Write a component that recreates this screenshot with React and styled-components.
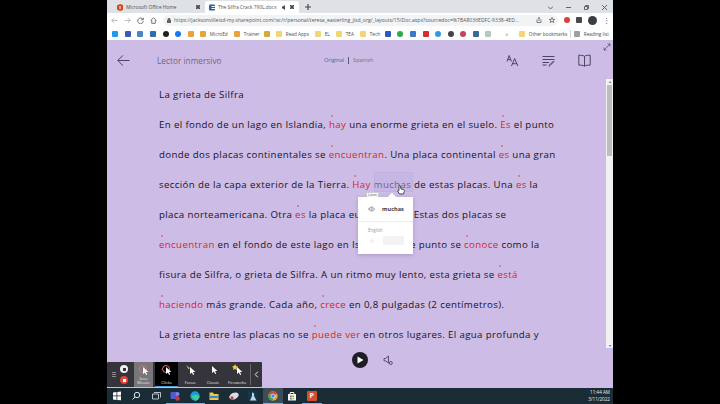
import React from "react";
import styled, { createGlobalStyle } from "styled-components";

const GlobalStyle = createGlobalStyle`
	html, body {
		margin: 0;
		padding: 0;
		background: #000;
		width: 720px;
		height: 404px;
		overflow: hidden;
	}
	* {
		box-sizing: border-box;
	}
`;

const Stage = styled.div`
	width: 720px;
	height: 404px;
	background: #000;
	padding: 0 107px;
	font-family: "Open Sans", "Liberation Sans", sans-serif;
`;

const Screen = styled.div`
	position: relative;
	width: 506px;
	height: 404px;
	display: flex;
	flex-direction: column;
	overflow: hidden;
`;

const TabBar = styled.div`
	height: 13px;
	background: #dee1e6;
	display: flex;
	align-items: flex-end;
	padding-left: 6px;
	flex-shrink: 0;
`;

const Tab = styled.div`
	width: ${(p) => (p.$active ? "94px" : "92px")};
	height: 12px;
	background: ${(p) => (p.$active ? "#fff" : "transparent")};
	border-radius: 3px 3px 0 0;
	display: flex;
	align-items: center;
	gap: 3px;
	padding: 0 4px;
	font-size: 4.8px;
	color: #4c4f54;
	white-space: nowrap;
`;

const TabIcon = styled.svg`
	width: 6px;
	height: 7px;
	flex-shrink: 0;
`;

const TabTitle = styled.span`
	flex: 1;
	overflow: hidden;
`;

const TabAudio = styled.svg`
	width: 5px;
	height: 5px;
	fill: #45484c;
	flex-shrink: 0;
`;

const TabClose = styled.svg`
	width: 4px;
	height: 4px;
	stroke: #45484c;
	stroke-width: 1.6;
	fill: none;
	flex-shrink: 0;
	margin-right: 1px;
`;

const NewTab = styled.svg`
	margin: 0 0 3px 6px;
	width: 6px;
	height: 6px;
	stroke: #45484c;
	stroke-width: 1.2;
	fill: none;
`;

const WindowControls = styled.div`
	margin-left: auto;
	display: flex;
	align-items: center;
	height: 12px;
	gap: 13px;
	padding-right: 6px;
`;

const WindowIcon = styled.svg`
	width: 5px;
	height: 5px;
	stroke: #55585c;
	stroke-width: 0.9;
	fill: none;
`;

const Toolbar = styled.div`
	height: 14px;
	background: #fff;
	display: flex;
	align-items: center;
	padding: 0 6px 0 4px;
	gap: 6px;
	flex-shrink: 0;
`;

const NavIcon = styled.svg`
	width: 7px;
	height: 7px;
	flex-shrink: 0;
	stroke: ${(p) => p.$color || "#5f6368"};
	stroke-width: 1.3;
	fill: none;
`;

const Omnibox = styled.div`
	flex: 1;
	height: 11px;
	border-radius: 6px;
	background: #f1f3f4;
	display: flex;
	align-items: center;
	padding: 0 3px 0 4px;
	gap: 3px;
	font-size: 5.1px;
	color: #55585d;
	white-space: nowrap;
	overflow: hidden;
	min-width: 0;
`;

const LockIcon = styled.svg`
	width: 4px;
	height: 5px;
	fill: #5f6368;
	flex-shrink: 0;
`;

const Url = styled.span`
	flex: 1;
	min-width: 0;
`;

const OmniIcon = styled.svg`
	width: 6px;
	height: 6px;
	margin-left: 4px;
	stroke: #5f6368;
	stroke-width: 0.8;
	fill: none;
	flex-shrink: 0;
`;

const Extension = styled.span`
	width: ${(p) => p.$size}px;
	height: ${(p) => p.$size}px;
	border-radius: ${(p) => (p.$square ? "1px" : "50%")};
	background: ${(p) => p.$color};
	flex-shrink: 0;
`;

const MenuDots = styled.span`
	width: 4px;
	font-size: 7px;
	line-height: 7px;
	text-align: center;
	color: #55585c;
	flex-shrink: 0;
`;

const Bookmarks = styled.div`
	height: 13px;
	background: #fff;
	display: flex;
	align-items: center;
	padding-left: 2px;
	flex-shrink: 0;
	font-size: 4.7px;
	color: #4a4d52;
	white-space: nowrap;
`;

const FavSlot = styled.span`
	width: 12.6px;
	display: flex;
	justify-content: center;
	flex-shrink: 0;
`;

const Fav = styled.span`
	width: 6px;
	height: 6px;
	border-radius: ${(p) => (p.$round ? "50%" : "1px")};
	background: ${(p) => p.$color};
	flex-shrink: 0;
`;

const Bookmark = styled.span`
	width: ${(p) => p.$width}px;
	display: flex;
	align-items: center;
	gap: 4px;
	flex-shrink: 0;
`;

const Overflow = styled.span`
	width: 24px;
	text-align: center;
	font-size: 5px;
	color: #55585c;
	flex-shrink: 0;
`;

const BookmarkDivider = styled.span`
	width: 1px;
	height: 8px;
	background: #d8d8d8;
	margin: 0 3px;
	flex-shrink: 0;
`;

const Reader = styled.div`
	flex: 1;
	min-height: 0;
	display: flex;
	background: #cdbde6;
`;

const ReaderMain = styled.div`
	flex: 1;
	min-width: 0;
	display: flex;
	flex-direction: column;
`;

const ReaderHeader = styled.div`
	height: 40px;
	display: flex;
	align-items: center;
	padding: 0 15px 0 10px;
	flex-shrink: 0;
`;

const HeaderTitle = styled.div`
	margin-left: 27px;
	width: 167px;
	font-size: 8.3px;
	color: #6d6780;
`;

const LangSwitch = styled.div`
	display: flex;
	align-items: center;
	font-size: 5.5px;
	color: #75708a;
	gap: 4px;
`;

const LangActive = styled.span`
	color: #3f68a8;
`;

const LangDivider = styled.span`
	width: 1px;
	height: 7px;
	background: #5d5870;
`;

const HeaderTools = styled.div`
	margin-left: auto;
	display: flex;
	align-items: center;
	gap: 23px;
`;

const HeaderIcon = styled.svg`
	width: 13px;
	height: 13px;
	stroke: #4a4560;
	stroke-width: 1;
	fill: none;
	flex-shrink: 0;
`;

const Article = styled.div`
	flex: 1;
	min-height: 0;
	padding: 0 0 0 52px;
	overflow: hidden;
`;

const Line = styled.p`
	margin: 0;
	height: 30px;
	line-height: 30px;
	font-size: 9.7px;
	letter-spacing: 0.36px;
	color: #16131f;
	white-space: nowrap;
`;

const Verb = styled.span`
	position: relative;
	color: #d8261c;

	&::before {
		content: "";
		position: absolute;
		left: 2px;
		top: -3px;
		width: 2px;
		height: 2px;
		border-radius: 50%;
		background: #dd6f70;
	}
`;

const ControlBar = styled.div`
	height: 42px;
	display: flex;
	align-items: flex-start;
	padding: 6px 0 0 245px;
	gap: 15px;
	flex-shrink: 0;
`;

const PlayButton = styled.div`
	width: 16px;
	height: 16px;
	border-radius: 50%;
	background: #1f1d26;
	display: flex;
	align-items: center;
	justify-content: center;
`;

const PlayGlyph = styled.svg`
	width: 8px;
	height: 8px;
	fill: #fff;
`;

const VoiceIcon = styled.svg`
	width: 11px;
	height: 11px;
	margin-top: 3px;
	stroke: #4a4560;
	stroke-width: 0.9;
	fill: none;
`;

const Scrollbar = styled.div`
	width: 7px;
	background: #f1f1f1;
	display: flex;
	flex-direction: column;
	justify-content: space-between;
	align-items: center;
	margin: 39px 0 40px;
	font-size: 4px;
	line-height: 5px;
	color: #606060;
`;

const ScrollThumb = styled.div`
	width: 5px;
	height: 71px;
	background: #bdbdbd;
	margin-top: 1px;
	margin-bottom: auto;
`;

const ExpandIcon = styled.svg`
	position: absolute;
	right: 2px;
	top: 43px;
	width: 8px;
	height: 8px;
	stroke: #4a4560;
	stroke-width: 0.7;
	fill: none;
`;

const Taskbar = styled.div`
	height: 16px;
	background: #1a2c36;
	display: flex;
	align-items: center;
	padding-right: 3px;
	flex-shrink: 0;
`;

const TaskSlot = styled.div`
	width: 19.5px;
	height: 16px;
	display: flex;
	align-items: center;
	justify-content: center;
	background: ${(p) => (p.$active ? "#3d4c56" : "transparent")};
	box-shadow: ${(p) => (p.$open ? "inset 0 -1px 0 #6fb3e8" : "none")};
`;

const TaskGlyph = styled.svg`
	width: 10px;
	height: 10px;
`;

const PptLetter = styled.span`
	width: 10px;
	height: 10px;
	border-radius: 1px;
	background: #d2502c;
	color: #fff;
	font-size: 7px;
	font-weight: 700;
	line-height: 10px;
	text-align: center;
`;

const Clock = styled.div`
	margin-left: auto;
	color: #e8ecef;
	font-size: 4.6px;
	line-height: 7px;
	text-align: right;
`;

const RecorderBar = styled.div`
	position: absolute;
	left: 0;
	top: 362px;
	width: 155px;
	height: 25px;
	background: #35343a;
	border-radius: 1px;
	display: flex;
	align-items: stretch;
	color: #e4e4e4;
`;

const Grip = styled.div`
	width: 11px;
	padding-left: 5px;
	display: flex;
	flex-direction: column;
	justify-content: center;
	gap: 1px;
`;

const GripBar = styled.span`
	width: 4px;
	height: 1px;
	background: #8d8d90;
`;

const RecButtons = styled.div`
	width: 12px;
	margin-right: 4px;
	display: flex;
	flex-direction: column;
	align-items: center;
	justify-content: center;
	gap: 3px;
`;

const RecDot = styled.span`
	width: 8px;
	height: 8px;
	border-radius: 50%;
	background: ${(p) => p.$color};
	display: flex;
	align-items: center;
	justify-content: center;

	&::after {
		content: "";
		width: 3px;
		height: 3px;
		background: ${(p) => p.$inner};
	}
`;

const RecTool = styled.div`
	width: ${(p) => p.$width}px;
	margin-right: ${(p) => p.$gap || 0}px;
	background: ${(p) => (p.$selected ? "#77767a" : p.$black ? "#000" : "transparent")};
	box-shadow: ${(p) => (p.$black ? "inset 0 -1px 0 #4f9fd8" : "none")};
	display: flex;
	flex-direction: column;
	align-items: center;
	justify-content: flex-end;
	padding-bottom: 2px;
	gap: 1px;
	font-size: 4px;
	line-height: 4.2px;
	text-align: center;
	white-space: pre-line;
`;

const ToolIcon = styled.svg`
	width: 11px;
	height: 11px;
	margin-bottom: auto;
	margin-top: 2px;
	flex-shrink: 0;
`;

const Collapse = styled.div`
	margin-left: auto;
	width: 12px;
	margin-top: 2px;
	margin-bottom: 2px;
	border-left: 1px solid #66656b;
	display: flex;
	align-items: center;
	justify-content: center;
`;

const HoverBox = styled.div`
	position: absolute;
	left: 267px;
	top: 172px;
	width: 39px;
	height: 20px;
	background: rgba(190, 176, 226, 0.5);
	box-shadow: inset 0 0 0 0.5px #bcaedb;
`;

const Cursor = styled.svg`
	position: absolute;
	left: 289px;
	top: 184px;
	width: 10px;
	height: 11px;
	fill: #fff;
	stroke: #3a3a3a;
	stroke-width: 0.9;
`;

const Popup = styled.div`
	position: absolute;
	left: 251px;
	top: 197px;
	width: 55px;
	height: 57px;
	background: #fff;
	box-shadow: 0 1px 4px rgba(60, 40, 90, 0.25);
	display: flex;
	flex-direction: column;

	&::before {
		content: "";
		position: absolute;
		left: 31px;
		top: -3px;
		width: 6px;
		height: 6px;
		background: #fff;
		transform: rotate(45deg);
	}
`;

const PopupWord = styled.div`
	height: 25px;
	display: flex;
	align-items: center;
	gap: 6px;
	padding-left: 10px;
	font-size: 5.6px;
	font-weight: 700;
	color: #3c3a44;
	border-bottom: 1px solid #f0f0f0;
`;

const SpeakerIcon = styled.svg`
	width: 8px;
	height: 8px;
	stroke: #777;
	stroke-width: 0.8;
	fill: none;
`;

const PopupLabel = styled.div`
	margin: 5px 0 0 10px;
	font-size: 4.5px;
	color: #999;
`;

const PopupRow = styled.div`
	margin: 3px 0 0 12px;
	display: flex;
	align-items: center;
	gap: 9px;
`;

const PopupDot = styled.span`
	width: 4px;
	height: 4px;
	background: #f1f1f1;
	border-radius: 50%;
`;

const PopupBlank = styled.span`
	width: 21px;
	height: 9px;
	background: #f3f3f3;
`;

const Tooltip = styled.div`
	position: absolute;
	left: 259px;
	top: 192px;
	width: 13px;
	height: 6px;
	background: #fff;
	border: 0.5px solid #ccc;
	font-size: 3.2px;
	line-height: 5px;
	text-align: center;
	color: #555;
`;

const lines = [
	["La grieta de Silfra"],
	["En el fondo de un lago en Islandia, ", { v: "hay" }, " una enorme grieta en el suelo. ", { v: "Es" }, " el punto"],
	["donde dos placas continentales se ", { v: "encuentran" }, ". Una placa continental ", { v: "es" }, " una gran"],
	["sección de la capa exterior de la Tierra. ", { v: "Hay" }, " muchas de estas placas. Una ", { v: "es" }, " la"],
	["placa norteamericana. Otra ", { v: "es" }, " la placa euroasiática. Estas dos placas se"],
	[{ v: "encuentran" }, " en el fondo de este lago en Islandia. Este punto se ", { v: "conoce" }, " como la"],
	["fisura de Silfra, o grieta de Silfra. A un ritmo muy lento, esta grieta se ", { v: "está" }],
	[{ v: "haciendo" }, " más grande. Cada año, ", { v: "crece" }, " en 0,8 pulgadas (2 centímetros)."],
	["La grieta entre las placas no se ", { v: "puede ver" }, " en otros lugares. El agua profunda y"],
];

const favs = ["#1d9bf0", "#3b5bb5", "#4a86c5", "#2a6db5", "#222", "#1877f2", "#e8a33d", "#e8a33d"];
const tail = ["#2a5bc4", "#2da84a", "#3a78c8", "#d62b2b", "#2f9be0", "#444", "#c0455a", "#3a6a9a", "#b9c9b9"];
const folder = "#f2d575";

const ArrowCursor = ({ x = 3, y = 2 }) => (
	<path transform={`translate(${x} ${y})`} d="M0 0v7l1.800-1.600L3.200 8l1-.6L3 5h2.400z" fill="#fff" />
);

const App = () => {
	return (
		<Stage>
			<GlobalStyle />
			<Screen>
				<TabBar>
					<Tab>
						<TabIcon viewBox="0 0 6 7"><path d="M3 0 6 1v5L3 7 0 5.500v-4z" fill="#d9481c" /><path d="M3 2v3" stroke="#fff" /></TabIcon>
						<TabTitle>Microsoft Office Home</TabTitle>
						<TabClose viewBox="0 0 4 4"><path d="M0 0l4 4M4 0 0 4" /></TabClose>
					</Tab>
					<Tab $active>
						<TabIcon viewBox="0 0 6 7"><rect y="0.500" width="6" height="6" rx="1" fill="#2b5fa8" /><rect x="2.500" y="2" width="3.500" height="1" fill="#fff" /><rect x="2.500" y="4" width="3.500" height="1" fill="#fff" /></TabIcon>
						<TabTitle>The Silfra Crack 790L.docx</TabTitle>
						<TabAudio viewBox="0 0 5 5"><path d="M0 1.500v2h1L3 5V0L1 1.500z" /></TabAudio>
						<TabClose viewBox="0 0 4 4"><path d="M0 0l4 4M4 0 0 4" /></TabClose>
					</Tab>
					<NewTab viewBox="0 0 6 6"><path d="M3 0v6M0 3h6" /></NewTab>
					<WindowControls>
						<WindowIcon viewBox="0 0 5 5"><path d="M0 1.500 2.500 4 5 1.500" /></WindowIcon>
						<WindowIcon viewBox="0 0 5 5"><path d="M0 2.500h5" /></WindowIcon>
						<WindowIcon viewBox="0 0 5 5"><path d="M0.500 1.500h3v3h-3zM1.500 1.500v-1h3v3h-1" /></WindowIcon>
						<WindowIcon viewBox="0 0 5 5"><path d="M0 0l5 5M5 0 0 5" /></WindowIcon>
					</WindowControls>
				</TabBar>
				<Toolbar>
					<NavIcon viewBox="0 0 10 10" $color="#b5b8bc"><path d="M9 5H1M4.500 1.500 1 5l3.500 3.500" /></NavIcon>
					<NavIcon viewBox="0 0 10 10" $color="#b5b8bc"><path d="M1 5h8M5.500 1.500 9 5 5.500 8.500" /></NavIcon>
					<NavIcon viewBox="0 0 10 10"><path d="M8.500 3.500A4 4 0 1 0 9 6M9 1v3H6" /></NavIcon>
					<NavIcon viewBox="0 0 10 10"><path d="M1 5l4-4 4 4M2.500 4.500V9h5V4.500" /></NavIcon>
					<Omnibox>
						<LockIcon viewBox="0 0 4 5"><path d="M0 2h.6V1.300a1.400 1.300 0 0 1 2.800 0V2H4v3H0z" /></LockIcon>
						<Url>https://jacksonvilleisd-my.sharepoint.com/:w:/r/personal/teresa_easterling_jisd_org/_layouts/15/Doc.aspx?sourcedoc=%7BA8036EDFC-9338-4ED...</Url>
						<OmniIcon viewBox="0 0 6 6"><path d="M1 2.500V5.500h4V2.500M3 4V.5M1.800 1.500 3 .5l1.200 1" /></OmniIcon>
						<OmniIcon viewBox="0 0 6 6"><path d="M3 .5 3.700 2.300 5.700 2.400 4.100 3.600 4.700 5.500 3 4.400 1.300 5.500 1.900 3.600.3 2.400 2.300 2.300z" /></OmniIcon>
					</Omnibox>
					<Extension $size={6} $color="#d9403a" />
					<Extension $size={6} $color="#45484c" $square />
					<Extension $size={9} $color="#3a3d42" />
					<MenuDots>⋮</MenuDots>
				</Toolbar>
				<Bookmarks>
					{favs.map((color, i) => (
						<FavSlot key={i}><Fav $color={color} $round={i === 4 || i === 5} /></FavSlot>
					))}
					<Bookmark $width={24}>MicroEd</Bookmark>
					<Bookmark $width={30}><Fav $color="#e8a33d" />Trainer</Bookmark>
					<Bookmark $width={12}><Fav $color="#d8a838" /></Bookmark>
					<Bookmark $width={39}><Fav $color={folder} />Read Apps</Bookmark>
					<Bookmark $width={21}><Fav $color={folder} />EL</Bookmark>
					<Bookmark $width={24}><Fav $color={folder} />TEA</Bookmark>
					<Bookmark $width={21.7}><Fav $color={folder} />Tech</Bookmark>
					{tail.map((color, i) => (
						<FavSlot key={i}><Fav $color={color} $round={i === 1 || (i > 3 && i < 7)} /></FavSlot>
					))}
					<Overflow>»</Overflow>
					<Bookmark $width={48}><Fav $color={folder} />Other bookmarks</Bookmark>
					<BookmarkDivider />
					<Bookmark $width={34}><Fav $color="#9aa0a6" />Reading list</Bookmark>
				</Bookmarks>
				<Reader>
					<ReaderMain>
						<ReaderHeader>
							<HeaderIcon viewBox="0 0 13 13"><path d="M12.500 6.500H.8M6 1.300.8 6.500 6 11.700" /></HeaderIcon>
							<HeaderTitle>Lector inmersivo</HeaderTitle>
							<LangSwitch>
								<LangActive>Original</LangActive>
								<LangDivider />
								<span>Spanish</span>
							</LangSwitch>
							<HeaderTools>
								<HeaderIcon viewBox="0 0 13 13"><path d="M1 7.500 3.200 1.500 5.400 7.500M1.700 5.600h3M5.500 12 8.600 4.500 11.800 12M6.600 9.700h4.200" /></HeaderIcon>
								<HeaderIcon viewBox="0 0 13 13"><path d="M.5 2.500h12M.5 5.500h12M.5 8.500h6.500M.5 11h4M12 7.500 8 11.500l-1 .8.5-1.300 4-4z" /></HeaderIcon>
								<HeaderIcon viewBox="0 0 13 13"><path d="M6.500 2.300C5.300 1.300 2.500 1.200.8 1.200v9.900c1.700 0 4.500.1 5.700 1.100 1.200-1 4-1.100 5.700-1.100V1.200c-1.700 0-4.500.1-5.700 1.100zM6.500 2.300v9.900" /></HeaderIcon>
							</HeaderTools>
						</ReaderHeader>
						<Article>
							{lines.map((parts, i) => (
								<Line key={i}>
									{parts.map((part, j) =>
										typeof part === "string" ? part : <Verb key={j}>{part.v}</Verb>
									)}
								</Line>
							))}
						</Article>
						<ControlBar>
							<PlayButton>
								<PlayGlyph viewBox="0 0 8 8"><path d="M1.500 0.500 7.500 4l-6 3.500z" /></PlayGlyph>
							</PlayButton>
							<VoiceIcon viewBox="0 0 11 11">
								<path d="M1 3.500v2.300h1.500L5.500 8V1L2.500 3.500z" />
								<circle cx="7.800" cy="8" r="1.500" />
							</VoiceIcon>
						</ControlBar>
					</ReaderMain>
					<Scrollbar>
						<span>▴</span>
						<ScrollThumb />
						<span>▾</span>
					</Scrollbar>
				</Reader>
				<Taskbar>
					<TaskSlot>
						<TaskGlyph viewBox="0 0 10 10"><path d="M1 1.500 4.500 1v3.500H1zM5.300 1 9 .5v4H5.300zM1 5.300h3.500V9L1 8.500zM5.300 5.300H9v4L5.300 9z" fill="#fff" /></TaskGlyph>
					</TaskSlot>
					<TaskSlot>
						<TaskGlyph viewBox="0 0 10 10"><circle cx="6" cy="4" r="2.700" fill="none" stroke="#dfe4e8" /><path d="M4 6 1.500 8.500" stroke="#dfe4e8" /></TaskGlyph>
					</TaskSlot>
					<TaskSlot>
						<TaskGlyph viewBox="0 0 10 10"><path d="M1.500 3h6v5h-6zM3 1.500h6.500v5" fill="none" stroke="#dfe4e8" strokeWidth="0.800" /></TaskGlyph>
					</TaskSlot>
					<TaskSlot $open>
						<TaskGlyph viewBox="0 0 10 10"><rect x="0.500" y="1" width="7" height="7" rx="1" fill="#5059c9" /><circle cx="7.500" cy="3" r="2" fill="#7b83eb" /><circle cx="7.500" cy="7.500" r="2.300" fill="#c8383f" /></TaskGlyph>
					</TaskSlot>
					<TaskSlot $open>
						<TaskGlyph viewBox="0 0 10 10"><circle cx="5" cy="5" r="4.700" fill="#1f9ad6" /><path d="M1 6.500C3 3 7 3 9.500 5.500 9 8 7 9.700 5 9.700 4 8 3 6.500 1 6.500z" fill="#3ccf91" /></TaskGlyph>
					</TaskSlot>
					<TaskSlot>
						<TaskGlyph viewBox="0 0 10 10"><path d="M.5 1.500h3.500l1 1.500h4.500v6H.5z" fill="#f2c14e" /><rect x="0.500" y="5" width="9" height="2" fill="#2f8fd0" /></TaskGlyph>
					</TaskSlot>
					<TaskSlot>
						<TaskGlyph viewBox="0 0 10 10"><ellipse cx="5" cy="5" rx="5" ry="3.200" transform="rotate(-25 5 5)" fill="#d7dee4" /><circle cx="3" cy="6.800" r="1.500" fill="#c8383f" /></TaskGlyph>
					</TaskSlot>
					<TaskSlot>
						<TaskGlyph viewBox="0 0 10 10"><rect width="10" height="10" fill="#12364f" /><path d="M4 1.500c2 0 2.500 2 2 3.500L8.500 9.500H2L4 5z" fill="#bcd8e6" /></TaskGlyph>
					</TaskSlot>
					<TaskSlot $active $open>
						<TaskGlyph viewBox="0 0 10 10"><circle cx="5" cy="5" r="4.700" fill="#e0a93a" /><path d="M5 5 .9 2.700A4.700 4.700 0 0 1 9.100 2.700z" fill="#d8453a" /><path d="M5 5 .9 2.700A4.700 4.700 0 0 0 5 9.700z" fill="#3ba35a" /><circle cx="5" cy="5" r="2" fill="#4285f4" stroke="#fff" strokeWidth="0.600" /></TaskGlyph>
					</TaskSlot>
					<TaskSlot>
						<TaskGlyph viewBox="0 0 10 10"><path d="M1 3h8v6.500H1z" fill="#f4f5f6" /><path d="M3.200 3V1.500h3.600V3" fill="none" stroke="#f4f5f6" /><rect x="3" y="4.500" width="1.700" height="1.700" fill="#e0543c" /><rect x="5.300" y="4.500" width="1.700" height="1.700" fill="#6fb23f" /><rect x="3" y="6.800" width="1.700" height="1.700" fill="#2f8fd0" /><rect x="5.300" y="6.800" width="1.700" height="1.700" fill="#e8b93d" /></TaskGlyph>
					</TaskSlot>
					<TaskSlot $open><PptLetter>P</PptLetter></TaskSlot>
					<Clock>
						11:44 AM
						<br />
						3/11/2022
					</Clock>
				</Taskbar>

				<ExpandIcon viewBox="0 0 8 8"><path d="M1 7 7 1M4.500 1H7v2.500M1 4.500V7h2.500" /></ExpandIcon>
				<HoverBox />
				<Cursor viewBox="0 0 10 11"><path d="M3 1.500c.8-.6 1.200 0 1.300.6L5 5l2.500.5c1 .3 1 1 .8 2L7.500 10h-4L1.500 7l1.500-.5z" /></Cursor>
				<Tooltip>Listen</Tooltip>
				<Popup>
					<PopupWord>
						<SpeakerIcon viewBox="0 0 8 8"><path d="M1 3v2h1.500L4 6.500v-5L2.500 3zM5.500 2.500a2 2 0 0 1 0 3" /></SpeakerIcon>
						muchas
					</PopupWord>
					<PopupLabel>English</PopupLabel>
					<PopupRow>
						<PopupDot />
						<PopupBlank />
					</PopupRow>
				</Popup>

				<RecorderBar>
					<Grip>
						<GripBar />
						<GripBar />
						<GripBar />
					</Grip>
					<RecButtons>
						<RecDot $color="#f0f0f0" $inner="#35343a" />
						<RecDot $color="#e0443a" $inner="#fff" />
					</RecButtons>
					<RecTool $width={19} $gap={2} $selected>
						<ToolIcon viewBox="0 0 11 11"><circle cx="5" cy="5" r="3.500" fill="none" stroke="#d9706f" /><ArrowCursor x={5} y={3} /></ToolIcon>
						{"Save\nMouse"}
					</RecTool>
					<RecTool $width={23} $black>
						<ToolIcon viewBox="0 0 11 11"><circle cx="5" cy="5" r="3.500" fill="none" stroke="#e06a6a" /><ArrowCursor x={5} y={3} /></ToolIcon>
						Clicks
					</RecTool>
					<RecTool $width={24}>
						<ToolIcon viewBox="0 0 11 11"><path d="M1 1 5 4 3.500 5.500z" fill="#b5aa55" /><ArrowCursor x={5} y={3} /></ToolIcon>
						Focus
					</RecTool>
					<RecTool $width={22}>
						<ToolIcon viewBox="0 0 11 11"><ArrowCursor x={4} y={2} /></ToolIcon>
						Classic
					</RecTool>
					<RecTool $width={26}>
						<ToolIcon viewBox="0 0 11 11"><path d="M3 0 4 2 6 2.500 4.500 4 5 6 3 5 1 6 1.500 4 0 2.500 2 2z" fill="#f2c94c" /><ArrowCursor x={5} y={3} /></ToolIcon>
						Fireworks
					</RecTool>
					<Collapse>
						<NavIcon viewBox="0 0 10 10" $color="#fff"><path d="M7 1 3 5l4 4" /></NavIcon>
					</Collapse>
				</RecorderBar>
			</Screen>
		</Stage>
	);
};

export default App;
